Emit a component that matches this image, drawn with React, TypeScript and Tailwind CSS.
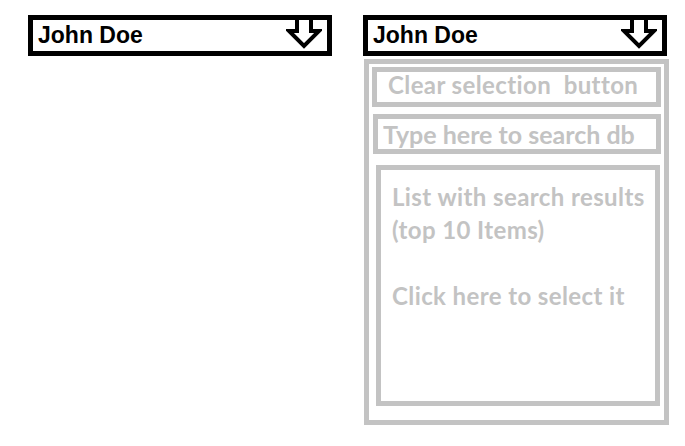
const ArrowDown = () => (
  <svg width="36" height="31" viewBox="0 0 36 31" className="shrink-0">
    <polyline
      points="11,0 11,11 3,11 18,26 33,11 25,11 25,0"
      fill="white"
      stroke="black"
      strokeWidth="4"
      strokeLinejoin="miter"
    />
  </svg>
);

const Picker = () => (
  <div className="w-[304px] h-[41px] border-[5px] border-black bg-white flex items-start justify-between pr-[5px]">
    <span className="pl-[5px] text-[23px] leading-[31px] font-bold text-black font-['Liberation_Sans',Arial,sans-serif]">
      John Doe
    </span>
    <ArrowDown />
  </div>
);

export default function App() {
  return (
    <div className="w-[685px] h-[446px] bg-white flex items-start gap-[31px] pl-[28px] pt-[15px]">
      <Picker />

      <div className="flex flex-col gap-[3px]">
        <Picker />

        <div className="ml-px w-[305px] h-[366px] border-[5px] border-[#c3c3c3] flex flex-col px-[3px] pt-[3px] pb-[14px] font-['Lato',sans-serif] font-bold text-[#c3c3c3]">
          <button className="h-[40px] border-[5px] border-[#c3c3c3] text-left pl-[11px] pb-[4px] text-[24px] tracking-[0.4px] leading-[26px] whitespace-pre">
            Clear selection  button
          </button>

          <div className="mt-[7px] ml-px h-[40px] border-[5px] border-[#c3c3c3] flex items-center pl-[5px]">
            <input
              readOnly
              placeholder="Type here to search db"
              className="w-full bg-transparent outline-none text-[25px] leading-[28px] font-bold placeholder:text-[#c3c3c3]"
            />
          </div>

          <div className="mt-[11px] ml-[4px] mr-px flex-1 border-[5px] border-[#c3c3c3] pl-[11px] pt-[10px] text-[24px] tracking-[0.4px] leading-[33px]">
            <div>List with search results</div>
            <div>(top 10 Items)</div>
            <div className="mt-[33px] cursor-pointer">Click here to select it</div>
          </div>
        </div>
      </div>
    </div>
  );
}
